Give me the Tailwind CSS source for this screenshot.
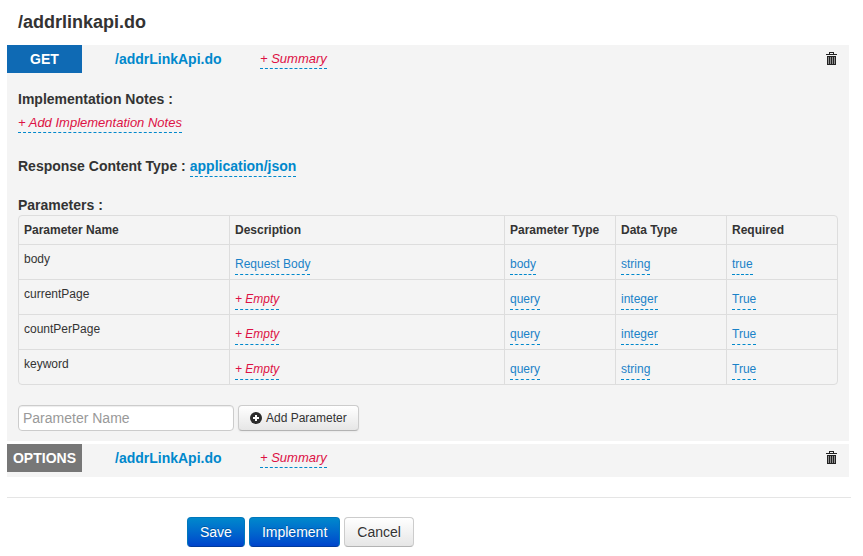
<!DOCTYPE html>
<html lang="en">
<head>
<meta charset="utf-8">
<meta name="viewport" content="width=device-width, initial-scale=1">
<title>/addrlinkapi.do</title>
<script src="https://cdn.jsdelivr.net/npm/@tailwindcss/browser@4"></script>
</head>
<body class="bg-white font-['Liberation_Sans',Arial,sans-serif] text-[14px] leading-5 text-[#333]">
<svg class="hidden" aria-hidden="true">
  <symbol id="trash" viewBox="0 0 11 13">
    <path fill="#222" d="M3 0h5v2h3v1H0V2h3zM4 1v1h3V1zM1 4h9v9H1z" fill-rule="evenodd"/>
    <path fill="#909090" d="M2 5h1v7H2zM4 5h1v7H4zM6 5h1v7H6zM8 5h1v7H8z"/>
  </symbol>
</svg>
<main class="pl-[7px] pr-3.5">
  <h1 class="pt-3 pb-[13px] pl-[11px] text-[18px] font-bold leading-5">/addrlinkapi.do</h1>

  <section class="mb-[3px] bg-[#f4f4f4] pb-2.5">
    <header class="flex items-start">
      <span class="w-[75px] bg-[#0f6ab4] text-center font-bold leading-7 text-white">GET</span>
      <a href="#" class="ml-[33px] w-[145px] font-bold leading-7 text-[#0088cc]">/addrLinkApi.do</a>
      <a href="#" class="mt-1 h-5 border-b border-dashed border-[#0088cc] text-[13px] italic text-[#dd1144]">+ Summary</a>
      <button type="button" aria-label="Delete GET operation" class="mt-[7px] mr-3 ml-auto"><svg class="block h-[13px] w-[11px]"><use href="#trash"/></svg></button>
    </header>

    <div class="px-[11px]">
      <h2 class="mt-4 font-bold">Implementation Notes :</h2>
      <div class="mt-1 flex"><a href="#" class="h-5 border-b border-dashed border-[#0088cc] text-[13px] italic text-[#dd1144]">+ Add Implementation Notes</a></div>
      <h2 class="mt-[23px] flex gap-1 font-bold">Response Content Type : <a href="#" class="border-b border-dashed border-[#0088cc] text-[#0088cc]">application/json</a></h2>
      <h2 class="mt-[18px] font-bold">Parameters :</h2>

      <div class="rounded border border-[#ddd]">
        <table class="w-full table-fixed border-separate border-spacing-0 text-left text-[12px] leading-5">
          <colgroup><col class="w-[210px]"><col><col class="w-[111px]"><col class="w-[111px]"><col class="w-[111px]"></colgroup>
          <thead class="[&_th]:h-7 [&_th]:px-[5px] [&_th+th]:border-l [&_th+th]:border-[#ddd]">
            <tr><th>Parameter Name</th><th>Description</th><th>Parameter Type</th><th>Data Type</th><th>Required</th></tr>
          </thead>
          <tbody class="[&_a]:inline-block [&_a]:h-[21px] [&_a]:border-b [&_a]:border-dashed [&_a]:border-[#0088cc] [&_a]:align-top [&_a]:text-[#1a82c8] [&_td]:h-[35px] [&_td]:border-t [&_td]:border-[#ddd] [&_td]:px-[5px] [&_td]:align-top [&_td]:pt-1 [&_td+td]:border-l [&_td+td]:pt-[9px]">
            <tr><td>body</td><td><a href="#">Request Body</a></td><td><a href="#">body</a></td><td><a href="#">string</a></td><td><a href="#">true</a></td></tr>
            <tr><td>currentPage</td><td><a href="#" class="italic !text-[#dd1144]">+ Empty</a></td><td><a href="#">query</a></td><td><a href="#">integer</a></td><td><a href="#">True</a></td></tr>
            <tr><td>countPerPage</td><td><a href="#" class="italic !text-[#dd1144]">+ Empty</a></td><td><a href="#">query</a></td><td><a href="#">integer</a></td><td><a href="#">True</a></td></tr>
            <tr><td>keyword</td><td><a href="#" class="italic !text-[#dd1144]">+ Empty</a></td><td><a href="#">query</a></td><td><a href="#">string</a></td><td><a href="#">True</a></td></tr>
          </tbody>
        </table>
      </div>

      <form class="mt-5 flex gap-1">
        <input type="text" aria-label="Parameter Name" placeholder="Parameter Name" class="h-[26px] w-[216px] rounded border border-[#ccc] bg-white px-1 text-[14px] shadow-[inset_0_1px_1px_rgba(0,0,0,0.075)] placeholder:text-[#999]">
        <button type="button" class="flex h-[26px] items-center gap-1 rounded border border-[#ccc] border-b-[#b3b3b3] bg-linear-to-b from-white to-[#e6e6e6] px-[11px] text-[12px] shadow-[0_1px_2px_rgba(0,0,0,0.05)]">
          <svg class="h-3 w-3" viewBox="0 0 12 12"><circle cx="6" cy="6" r="6" fill="#2b2b2b"/><path fill="#fff" d="M5 3h2v2h2v2H7v2H5V7H3V5h2z"/></svg>
          Add Parameter
        </button>
      </form>
    </div>
  </section>

  <section class="bg-[#f4f4f4] pb-[5px]">
    <header class="flex items-start">
      <span class="w-[75px] bg-[#777] text-center font-bold leading-7 text-white">OPTIONS</span>
      <a href="#" class="ml-[33px] w-[145px] font-bold leading-7 text-[#0088cc]">/addrLinkApi.do</a>
      <a href="#" class="mt-1 h-5 border-b border-dashed border-[#0088cc] text-[13px] italic text-[#dd1144]">+ Summary</a>
      <button type="button" aria-label="Delete OPTIONS operation" class="mt-[7px] mr-3 ml-auto"><svg class="block h-[13px] w-[11px]"><use href="#trash"/></svg></button>
    </header>
  </section>
</main>

<hr class="mt-5 mr-3 ml-[7px] border-[#e5e5e5]">
<footer class="mt-[19px] flex gap-1 pl-[187px]">
  <button type="button" class="h-[30px] rounded border border-[#0077bb] border-b-[#003a9c] bg-linear-to-b from-[#0088cc] to-[#0044cc] px-3 text-white [text-shadow:0_-1px_0_rgba(0,0,0,0.25)]">Save</button>
  <button type="button" class="h-[30px] rounded border border-[#0077bb] border-b-[#003a9c] bg-linear-to-b from-[#0088cc] to-[#0044cc] px-3 text-white [text-shadow:0_-1px_0_rgba(0,0,0,0.25)]">Implement</button>
  <button type="button" class="h-[30px] rounded border border-[#ccc] border-b-[#b3b3b3] bg-linear-to-b from-white to-[#e6e6e6] px-3 [text-shadow:0_1px_1px_rgba(255,255,255,0.75)]">Cancel</button>
</footer>
</body>
</html>
